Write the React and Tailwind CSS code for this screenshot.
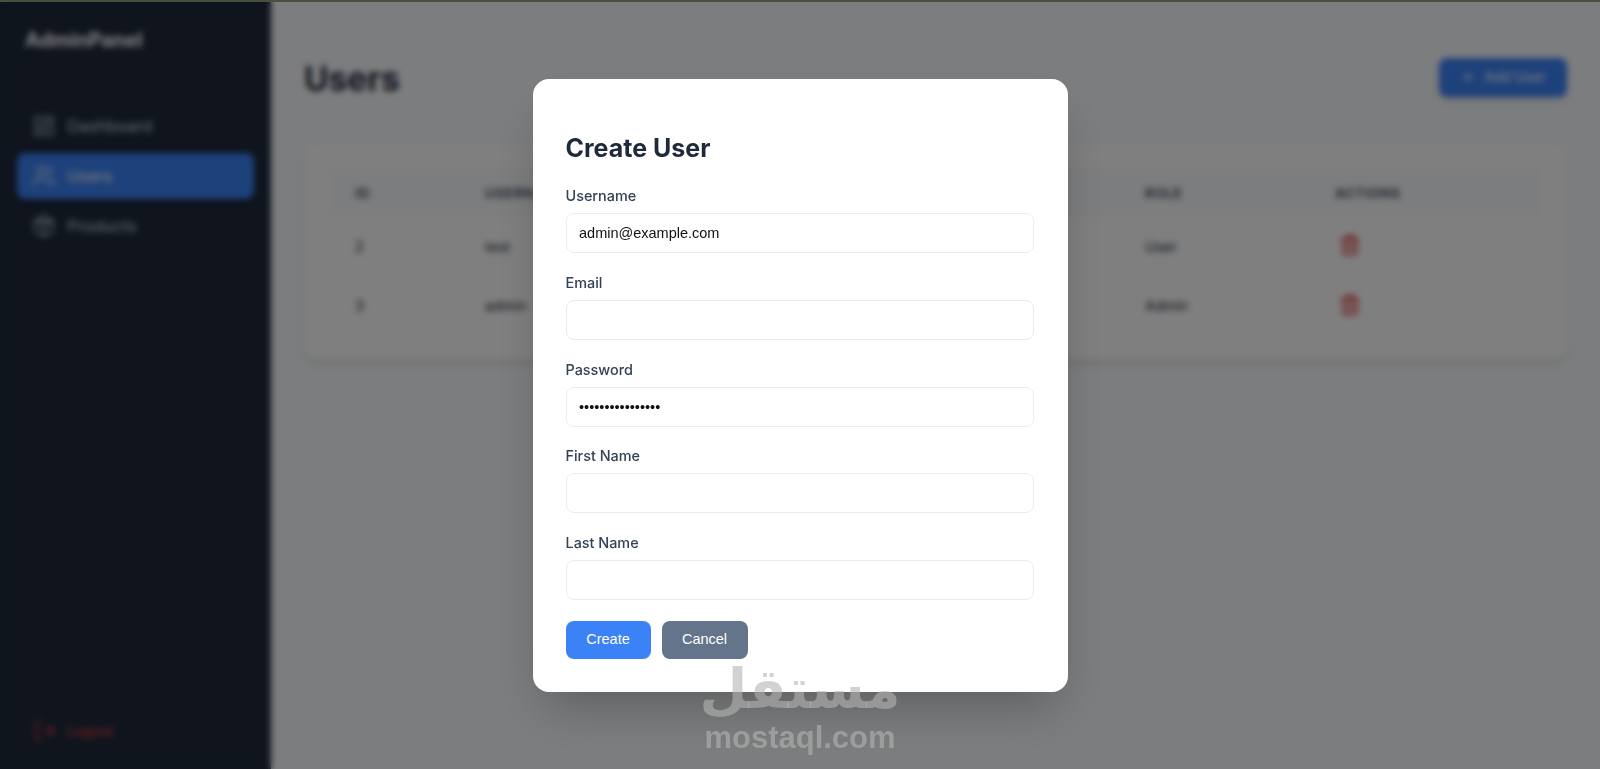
import { LayoutDashboard, Users, Package, LogOut, Plus, Trash2 } from "lucide-react";

const inter = "font-['Inter',sans-serif]";

function NavItem({ icon: Icon, label, active }) {
  return (
    <div className={`flex h-[46px] items-center gap-[11px] rounded-lg px-[15px] text-[16.5px] ${active ? "bg-[#3b82f6] text-white shadow-md" : "text-[#cbd5e1]"}`}>
      <Icon size={24} strokeWidth={1.5} />
      <span>{label}</span>
    </div>
  );
}

function Field({ label, value = "", type = "text" }) {
  return (
    <div className="mb-[18.53px] flex flex-col">
      <label className="mb-[6.6px] text-[14.4px] font-medium leading-[21.6px] text-[#334155]">{label}</label>
      <input
        readOnly
        type={type}
        value={value}
        className="h-10 w-full rounded-lg border border-[#e9edf2] bg-white px-[12.5px] font-['Liberation_Sans',sans-serif] text-[14.5px] text-[#111111]"
      />
    </div>
  );
}

const rows = [
  { id: 2, name: "test", email: "test@example.com", role: "User" },
  { id: 3, name: "admin", email: "admin@example.com", role: "Admin" },
];

export default function App() {
  return (
    <div className={`relative flex h-[769px] w-[1600px] overflow-hidden bg-[#f8fafc] ${inter}`}>
      <aside className="flex w-[271px] shrink-0 flex-col bg-[#1e293b] px-[17px] pb-[26px]">
        <div className="flex h-[79px] items-center pl-2 text-xl font-bold text-white">AdminPanel</div>
        <nav className="mt-6 flex flex-col gap-1">
          <NavItem icon={LayoutDashboard} label="Dashboard" />
          <NavItem icon={Users} label="Users" active />
          <NavItem icon={Package} label="Products" />
        </nav>
        <div className="mt-auto flex h-6 items-center gap-[10px] px-4 text-sm text-[#ef4444]">
          <LogOut size={24} strokeWidth={1.5} />
          <span>Logout</span>
        </div>
      </aside>

      <main className="min-w-0 flex-1 pl-[33px] pr-[33px]">
        <header className="flex h-[143px] items-center justify-between pb-[8px] pt-[21px]">
          <h1 className="mt-[2px] text-[33.5px] font-bold text-[#1e293b]">Users</h1>
          <button className="mb-[2px] flex h-[39px] w-[128px] items-center justify-center gap-2 rounded-lg bg-[#3b82f6] text-sm text-white shadow-md">
            <Plus size={16} />
            Add User
          </button>
        </header>
        <section className="h-[217px] rounded-xl border border-[#f1f5f9] bg-white p-6 shadow-md">
          <table className="w-full table-fixed border-collapse text-left text-[14.4px] text-[#1e293b]">
            <thead>
              <tr className="h-12 bg-[#f8fafc] text-[13.4px] tracking-wider text-[#334155]">
                <th className="w-[130px] pl-[26px] pt-[2px] font-semibold">ID</th>
                <th className="w-[230px] pl-[26px] pt-[2px] font-semibold">USERNAME</th>
                <th className="w-[430px] pl-[26px] pt-[2px] font-semibold">EMAIL</th>
                <th className="w-[190px] pl-[26px] pt-[2px] font-semibold">ROLE</th>
                <th className="pl-[26px] pt-[2px] font-semibold">ACTIONS</th>
              </tr>
            </thead>
            <tbody>
              {rows.map((r, i) => (
                <tr key={r.id} className={`h-[59px] ${i === 0 ? "border-b border-[#f1f5f9]" : ""}`}>
                  <td className="pl-[26px] pt-[3px]">{r.id}</td>
                  <td className="pl-[26px] pt-[3px]">{r.name}</td>
                  <td className="pl-[26px] pt-[3px]">{r.email}</td>
                  <td className="pl-[26px] pt-[3px]">{r.role}</td>
                  <td className="pl-[30px]"><Trash2 size={22} strokeWidth={2.2} className="text-[#dc2626]" /></td>
                </tr>
              ))}
            </tbody>
          </table>
        </section>
      </main>

      <div className="absolute inset-0 flex items-start justify-center bg-black/50 pt-[79px] backdrop-blur-[3px]">
        <div className="h-[613px] w-[535px] rounded-2xl bg-white pl-[33px] pr-[34px] pt-[53px] shadow-2xl">
          <h2 className="mb-[21.1px] text-[25px] font-bold leading-8 text-[#1e293b]">Create User</h2>
          <Field label="Username" value="admin@example.com" />
          <Field label="Email" />
          <Field label="Password" type="password" value="1234567890123456" />
          <Field label="First Name" />
          <Field label="Last Name" />
          <div className="mt-[21px] flex gap-[11px] font-['Liberation_Sans',sans-serif] text-[14.5px] text-white">
            <button className="h-[38px] w-[85px] rounded-lg bg-[#3b82f6]">Create</button>
            <button className="h-[38px] w-[86px] rounded-lg bg-[#64748b]">Cancel</button>
          </div>
        </div>
      </div>

      <div className="absolute left-0 right-0 top-0 h-[2px] bg-[#46523f]" />

      <div className="pointer-events-none absolute left-[696px] top-[657px] flex w-[208px] flex-col items-center text-[#b4b4b4]/60">
        <span dir="rtl" className="font-['DejaVu_Sans',sans-serif] text-[55px] font-bold leading-[64px]">مستقل</span>
        <span className="font-['Liberation_Sans',sans-serif] text-[31px] font-bold leading-[34px]">mostaql.com</span>
      </div>
    </div>
  );
}
